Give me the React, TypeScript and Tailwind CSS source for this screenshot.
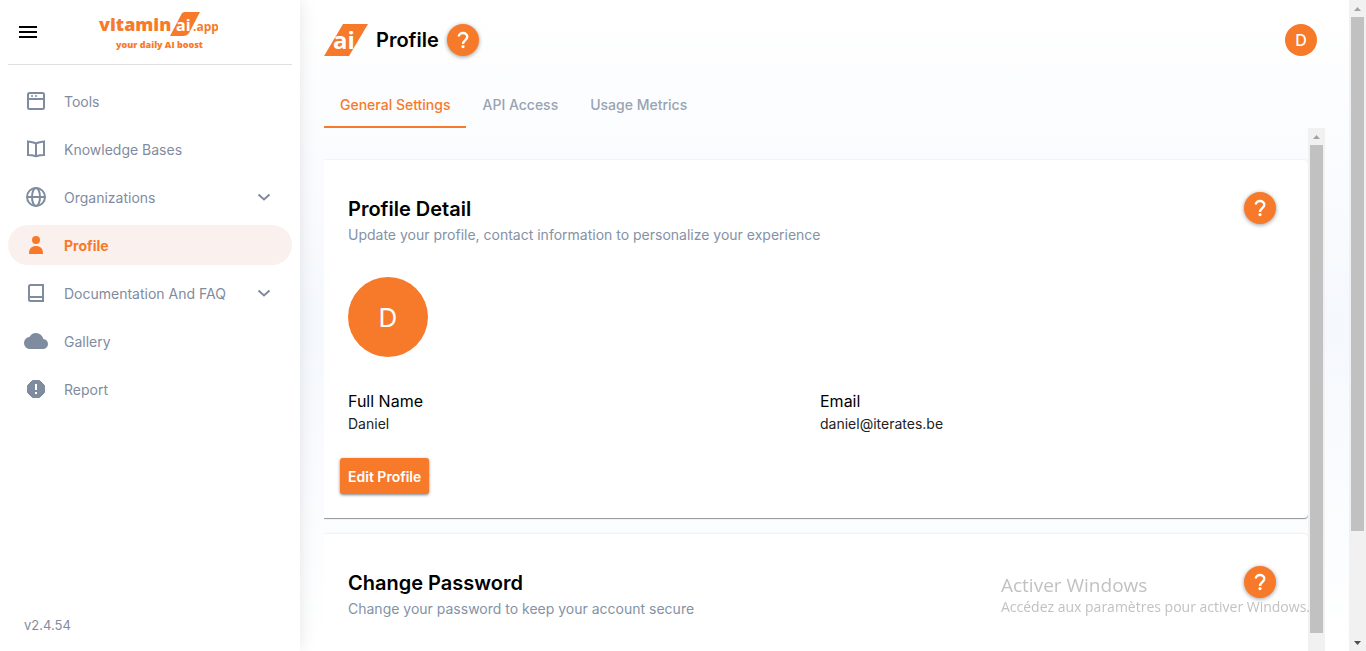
import type { ReactNode } from "react"
import { clsx } from "clsx"

type NavItem = {
    label: string
    icon: ReactNode
    active?: boolean
    expandable?: boolean
}

const navItems: NavItem[] = [
    {
        label: "Tools",
        icon: (
            <g fill="none" stroke="currentColor" strokeWidth="2">
                <rect x="4" y="4" width="16" height="16" rx="1.5" />
                <path d="M4 10h16" />
                <path d="M7 7h2M11 7h2" strokeWidth="1.6" />
            </g>
        ),
    },
    {
        label: "Knowledge Bases",
        icon: (
            <path
                d="M12 6.5C9.5 5.3 6.5 5 4 4.5V18c2.5 0 5.5.5 8 1.3 2.5-.8 5.5-1.3 8-1.3V4.5c-2.5.5-5.5.8-8 2zM12 6v13"
                fill="none"
                stroke="currentColor"
                strokeWidth="2"
            />
        ),
    },
    {
        label: "Organizations",
        expandable: true,
        icon: (
            <g fill="none" stroke="currentColor" strokeWidth="2">
                <circle cx="12" cy="12" r="9" />
                <ellipse cx="12" cy="12" rx="4" ry="9" />
                <path d="M3 12h18" />
            </g>
        ),
    },
    {
        label: "Profile",
        active: true,
        icon: (
            <path
                d="M12 3a4 4 0 1 1 0 8 4 4 0 0 1 0-8zM5 21v-1c0-4.5 3-7 7-7s7 2.5 7 7v1z"
                fill="currentColor"
            />
        ),
    },
    {
        label: "Documentation And FAQ",
        expandable: true,
        icon: (
            <path
                d="M6.5 4H19v16H6.5A1.5 1.5 0 0 1 5 18.5v-13A1.5 1.5 0 0 1 6.5 4zM5 16h14"
                fill="none"
                stroke="currentColor"
                strokeWidth="2"
            />
        ),
    },
    {
        label: "Gallery",
        icon: (
            <path
                d="M19.35 10.04A7.49 7.49 0 0 0 12 4C9.11 4 6.6 5.64 5.35 8.04A5.994 5.994 0 0 0 0 14c0 3.31 2.69 6 6 6h13c2.76 0 5-2.24 5-5 0-2.64-2.05-4.78-4.65-4.96z"
                fill="currentColor"
            />
        ),
    },
    {
        label: "Report",
        icon: (
            <>
                <path
                    d="M8.5 3.5h7l5 5v7l-5 5h-7l-5-5v-7z"
                    fill="currentColor"
                    stroke="currentColor"
                    strokeLinejoin="round"
                />
                <path d="M12 7v6M12 15v2" stroke="#fff" strokeWidth="2" />
            </>
        ),
    },
]

const tabs = ["General Settings", "API Access", "Usage Metrics"]

function Logo() {
    return (
        <svg width="120" height="40" viewBox="0 0 120 40" role="img" aria-label="vitamin ai app" className="font-['Open_Sans',sans-serif] font-bold">
            <g fill="#f77a2a">
                <text x="1" y="19" fontSize="18" fontWeight="800">vitamin</text>
                <path d="M87 0h15L91 21q-2 3-5 3H72l11-21q1-3 4-3z" />
                <text x="95" y="19" fontSize="12">.app</text>
                <text x="18" y="36" fontSize="9" fontWeight="800">your daily AI boost</text>
            </g>
            <text x="78" y="19" fontSize="16" fill="#fff">ai</text>
        </svg>
    )
}

function BrandMark() {
    return (
        <svg width="44" height="32" viewBox="0 0 44 32" aria-hidden="true" className="font-['Open_Sans',sans-serif] font-bold">
            <path d="M19 0h25L25 32H0z" fill="#f77a2a" />
            <text x="9" y="25" fontSize="24" fill="#fff">ai</text>
        </svg>
    )
}

function HelpButton() {
    return (
        <button
            type="button"
            aria-label="Help"
            className="flex size-8 shrink-0 items-center justify-center rounded-full bg-[#f77a2a] text-white shadow-[0_1px_4px_rgba(0,0,0,0.4)]"
        >
            <svg width="24" height="24" viewBox="0 0 24 24">
                <path
                    d="M7.8 8.5A4.2 3.8 0 0 1 12 5c2.5 0 4.3 1.6 4.3 3.8 0 3-4.3 3.7-4.3 7.2"
                    fill="none"
                    stroke="currentColor"
                    strokeWidth="2.4"
                />
                <circle cx="12" cy="18.6" r="1.6" fill="currentColor" />
            </svg>
        </button>
    )
}

function Sidebar() {
    return (
        <aside className="z-10 flex w-[300px] shrink-0 flex-col bg-white px-2 shadow-[0_0_16px_rgba(0,0,0,0.1)]">
            <div className="flex h-[65px] items-center gap-[58px] border-b border-[#e0e0e0] px-2">
                <button type="button" aria-label="Toggle menu" className="flex w-6 justify-center">
                    <svg width="24" height="24" viewBox="0 0 24 24">
                        <path d="M3 7h18M3 12h18M3 17h18" stroke="#000" strokeWidth="2" />
                    </svg>
                </button>
                <Logo />
            </div>

            <nav className="flex flex-col gap-2 pt-4">
                {navItems.map((item) => (
                    <a
                        key={item.label}
                        href="#"
                        className={clsx(
                            "flex h-10 items-center gap-4 rounded-full px-4 text-[14px]",
                            item.active ? "bg-[#faf1ee] font-bold text-[#f77a2a]" : "text-[#7f8c9f]"
                        )}
                    >
                        <svg width="24" height="24" viewBox="0 0 24 24" className="shrink-0">
                            {item.icon}
                        </svg>
                        <span className="flex-1">{item.label}</span>
                        {item.expandable && (
                            <svg width="24" height="24" viewBox="0 0 24 24">
                                <path d="M6.5 9.5l5.5 5 5.5-5" fill="none" stroke="currentColor" strokeWidth="2" />
                            </svg>
                        )}
                    </a>
                ))}
            </nav>

            <p className="mt-auto px-4 pb-4 text-[13px] leading-5 text-[#7f8c9f]">v2.4.54</p>
        </aside>
    )
}

function CardHeader({ title, subtitle }: { title: string; subtitle: string }) {
    return (
        <div className="flex items-start justify-between pr-2">
            <div>
                <h2 className="text-[20px] leading-[34px] font-semibold">{title}</h2>
                <p className="text-[14px] leading-[18px] text-[#8492a6]">{subtitle}</p>
            </div>
            <HelpButton />
        </div>
    )
}

function Field({ label, value }: { label: string; value: string }) {
    return (
        <div>
            <dt className="text-[16px] leading-6">{label}</dt>
            <dd className="text-[14px] leading-[22px] text-[#222]">{value}</dd>
        </div>
    )
}

// Arrow at the end of a scrollbar track
function TrackArrow({ down = false }: { down?: boolean }) {
    return (
        <svg width="17" height="17" viewBox="0 0 17 17" className="shrink-0">
            <path d={down ? "M5 7h7l-3.5 4z" : "M5 11h7L8.5 7z"} fill={down ? "#505050" : "#a3a3a3"} />
        </svg>
    )
}

export default function App() {
    return (
        <div className="flex h-screen overflow-hidden bg-white font-[Inter,sans-serif] text-black">
            <Sidebar />

            <div className="flex min-w-0 flex-1 flex-col bg-linear-to-b from-white via-[#f5f8fd] to-white pl-6">
                {/* Page header */}
                <header className="flex h-20 shrink-0 items-center gap-2 pr-8">
                    <BrandMark />
                    <h1 className="text-[20px] font-semibold">Profile</h1>
                    <HelpButton />
                    <button type="button" className="ml-auto size-8 rounded-full bg-[#f77a2a] text-[16px] font-medium text-white">
                        D
                    </button>
                </header>

                {/* Tabs */}
                <div role="tablist" className="flex h-12 shrink-0 text-[14px] font-medium">
                    {tabs.map((tab, i) => (
                        <button
                            key={tab}
                            type="button"
                            role="tab"
                            aria-selected={i === 0}
                            className={clsx(
                                "border-b-2 px-4 pt-[2px]",
                                i === 0 ? "border-[#f77a2a] text-[#f77a2a]" : "border-transparent text-[#98a3b3]"
                            )}
                        >
                            {tab}
                        </button>
                    ))}
                </div>

                <div className="flex min-h-0 flex-1 pr-6">
                    <main className="flex min-w-0 flex-1 flex-col gap-4 overflow-hidden pt-8">
                        <section className="shrink-0 rounded-r bg-white p-6 pt-8 shadow-[0_1px_1px_rgba(0,0,0,0.4),0_0_2px_rgba(0,0,0,0.12)]">
                            <CardHeader
                                title="Profile Detail"
                                subtitle="Update your profile, contact information to personalize your experience"
                            />
                            <div className="mt-[33px] flex size-20 items-center justify-center rounded-full bg-[#f77a2a] text-[26px] text-white">
                                D
                            </div>
                            <dl className="mt-8 grid grid-cols-2 gap-2">
                                <Field label="Full Name" value="Daniel" />
                                <Field label="Email" value="daniel@iterates.be" />
                            </dl>
                            <button
                                type="button"
                                className="mt-[23px] -ml-2 h-9 rounded-[3px] bg-[#f77a2a] px-2 text-[14px] font-semibold text-white shadow-[0_1px_3px_rgba(0,0,0,0.5)]"
                            >
                                Edit Profile
                            </button>
                        </section>

                        <section className="h-[360px] shrink-0 rounded-r bg-white p-6 pt-8 shadow-[0_0_2px_rgba(0,0,0,0.15)]">
                            <CardHeader title="Change Password" subtitle="Change your password to keep your account secure" />
                        </section>
                    </main>

                    <div aria-hidden="true" className="flex w-[17px] flex-col bg-[#f1f1f1] pb-[18px]">
                        <TrackArrow />
                        <div className="mx-[2px] flex-1 bg-[#c1c1c1]" />
                    </div>
                </div>
            </div>

            <div aria-hidden="true" className="flex w-[17px] shrink-0 flex-col bg-[#f1f1f1]">
                <TrackArrow />
                <div className="mx-[2px] h-[79%] bg-[#c1c1c1]" />
                <div className="mt-auto flex">
                    <TrackArrow down />
                </div>
            </div>

            {/* System activation notice, floats over everything */}
            <div className="pointer-events-none fixed right-14 bottom-[34px] z-20 font-['Open_Sans',sans-serif] text-[#838383]/50">
                <p className="text-[19px] leading-6">Activer Windows</p>
                <p className="text-[14px] leading-5">Accédez aux paramètres pour activer Windows.</p>
            </div>
        </div>
    )
}
